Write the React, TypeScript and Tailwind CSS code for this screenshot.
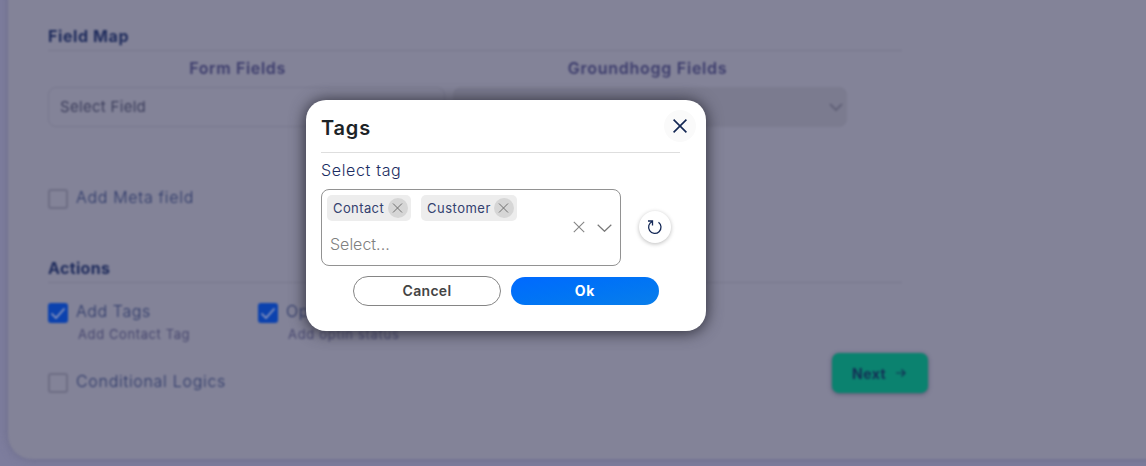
import React from "react";

type CheckProps = { label: string; labelClass: string; checked?: boolean };

function Check({ label, labelClass, checked = false }: CheckProps) {
  return (
    <div className="flex h-5 items-center whitespace-nowrap">
      <span
        className={
          checked
            ? "mt-[3px] flex size-5 shrink-0 items-center justify-center rounded-[3px] bg-[#0c42ae]"
            : "mt-[3px] size-5 shrink-0 rounded-[3px] border-2 border-[#6d6d84]"
        }
      >
        {checked && (
          <svg className="size-5" viewBox="0 0 20 20" fill="none" stroke="#8f98bd" strokeWidth="1.700">
            <path d="M3.5 10.5 8 15 16.500 5.500" />
          </svg>
        )}
      </span>
      <span className={"ml-2 text-[16px] font-light text-[#2b3768] " + labelClass}>{label}</span>
    </div>
  );
}

function Chip({ label, labelClass }: { label: string; labelClass: string }) {
  return (
    <span className="flex h-[26px] items-center rounded-[5px] bg-[#ededed] pr-[3px] pl-[6px]">
      <span className={"pt-[2px] text-[13px] whitespace-nowrap text-[#33416f] " + labelClass}>{label}</span>
      <span className="ml-auto flex size-5 items-center justify-center rounded-full bg-[#d6d6d6]">
        <svg className="size-5" viewBox="0 0 20 20" fill="none" stroke="#707070" strokeWidth="1">
          <path d="M5 5.500 14 14.500M14 5.500 5 14.500" />
        </svg>
      </span>
    </span>
  );
}

function Background() {
  return (
    <div className="-mt-2 h-[474px] w-[1160px] pl-2 blur-[0.8px]">
      <div className="h-[467px] rounded-bl-[24px] bg-[#838398] pl-10 shadow-[0_0_8px_1px_#6e6e8c]">
        <div className="flex h-[59px] w-[854px] items-end border-b border-[#77778d] pb-[4px]">
          <h2 className="text-[16px] leading-[20px] font-bold tracking-[0.6px] text-[#1e2b5c]">Field Map</h2>
        </div>
        <div className="flex h-[36px] w-[854px] items-center pb-[2px] text-[16px] font-semibold text-[#3c3c6c]">
          <div className="flex w-[379px] justify-center"><span className="tracking-[0.650px]">Form Fields</span></div>
          <div className="flex w-[441px] justify-center"><span className="tracking-[0.75px]">Groundhogg Fields</span></div>
        </div>
        <div className="flex gap-[8px]">
          <div className="flex h-10 w-[397px] items-center rounded-lg border border-[#78788e] pl-[11px] text-[15px] text-[#3c3e5c]">
            <span className="tracking-[0.3px]">Select Field</span>
          </div>
          <div className="flex h-10 w-[394px] items-center justify-end rounded-lg bg-[#7b7b8f] pr-[3px]">
            <svg className="size-4" viewBox="0 0 16 16" fill="none" stroke="#626278" strokeWidth="2">
              <path d="M2 5 8 11 14 5" />
            </svg>
          </div>
        </div>
        <div className="mt-[60px]">
          <Check label="Add Meta field" labelClass="tracking-[0.7px]" />
        </div>
        <div className="mt-[51px] flex h-[25px] w-[854px] items-start border-b border-[#77778d]">
          <h2 className="text-[16px] leading-[20px] font-bold tracking-[0.35px] text-[#1e2b5c]">Actions</h2>
        </div>
        <div className="mt-[18px] flex">
          <div className="w-[210px]">
            <Check label="Add Tags" labelClass="tracking-[0.6px]" checked />
            <p className="mt-[4px] pl-[30px] text-[13px] leading-[18px] tracking-[0.6px] text-[#484870]">Add Contact Tag</p>
          </div>
          <div className="w-[210px]">
            <Check label="Optin Status" labelClass="tracking-[0.6px]" checked />
            <p className="mt-[4px] pl-[30px] text-[13px] leading-[18px] tracking-[0.7px] text-[#484870]">Add optin status</p>
          </div>
        </div>
        <div className="flex w-[880px] items-start justify-between pt-[10px]">
          <div className="pt-[18px]">
            <Check label="Conditional Logics" labelClass="tracking-[0.7px]" />
          </div>
          <button className="flex h-10 w-24 items-center rounded-[7px] bg-[#0b826f] pl-5 text-[14px] font-bold text-[#142e55] shadow-[0_1px_4px_#55556f]">
            <span className="tracking-[0.5px]">Next</span>
            <svg className="ml-[9px] size-3" viewBox="0 0 12 12" fill="none" stroke="currentColor" strokeWidth="1.200">
              <path d="M1 6H10M6.500 2.500 10 6 6.500 9.500" />
            </svg>
          </button>
        </div>
      </div>
    </div>
  );
}

export default function App() {
  return (
    <main className="relative h-[466px] w-full overflow-hidden bg-[#7d7d9d] font-[Inter,sans-serif]">
      <Background />
      <section className="absolute top-[100px] left-[306px] h-[231px] w-[400px] rounded-[20px] bg-white px-[15px] shadow-[0_1px_15px_1px_#30303c]">
        <header className="flex h-[53px] w-[359px] items-center border-b border-[#dedede]">
          <h1 className="pt-[3px] text-[20px] font-semibold tracking-[0.8px] text-[#1d2327]">Tags</h1>
          <button className="-mr-4 ml-auto flex size-8 shrink-0 items-center justify-center rounded-full bg-[#fafafa]" aria-label="Close">
            <svg className="size-[14px]" viewBox="0 0 14 14" fill="none" stroke="#122653" strokeWidth="1.600">
              <path d="M.6.600 13.400 13.400M13.400.6.600 13.400" />
            </svg>
          </button>
        </header>
        <p className="flex h-9 items-center pb-[2px] text-[16px] font-light whitespace-nowrap text-[#1c2d62]">
          <span className="tracking-[0.65px]">Select tag</span>
        </p>
        <div className="flex items-center">
          <div className="flex h-[77px] w-[300px] items-center rounded-[8px] border border-[#929292] pr-[8px] pl-[5px]">
            <div className="h-full flex-1 pt-[5px]">
              <div className="flex gap-[10px]">
                <div className="grid w-[84px]"><Chip label="Contact" labelClass="tracking-[0.4px]" /></div>
                <div className="grid w-[96px]"><Chip label="Customer" labelClass="tracking-[0.5px]" /></div>
              </div>
              <p className="pt-[11px] pl-[3px] text-[16px] leading-[24px] font-light text-[#808080]">Select...</p>
            </div>
            <svg className="mr-[12px] mb-[2px] size-[12px]" viewBox="0 0 12 12" fill="none" stroke="#858585" strokeWidth="1.100">
              <path d="M.8.800 11.200 11.200M11.200.8.800 11.200" />
            </svg>
            <svg className="mt-[1px] h-2 w-[15px]" viewBox="0 0 15 8" fill="none" stroke="#777777" strokeWidth="1.200">
              <path d="M.7.700 7.500 7.300 14.300.7" />
            </svg>
          </div>
          <button className="mb-[2px] ml-[18px] flex size-8 items-center justify-center rounded-full bg-white shadow-[0_1px_4px_#bcbcbc]" aria-label="Refresh">
            <svg className="size-[16px]" viewBox="0 0 16 16" fill="none" stroke="#152957" strokeWidth="1.300">
              <path d="M1 2H5.500V6.500M5.300 2.500A6.200 6.200 0 1 0 11.500 3.200" />
            </svg>
          </button>
        </div>
        <div className="mt-[10px] ml-8 flex h-[30px] items-center gap-[10px]">
          <button className="flex h-[30px] w-[148px] items-center justify-center rounded-full border border-[#858585] pb-[2px] text-[14px] font-semibold text-[#444444]">
            <span className="tracking-[0.3px]">Cancel</span>
          </button>
          <button className="flex h-7 w-[148px] items-center justify-center rounded-full bg-linear-to-br from-[#0069ff] to-[#0a7eea] pb-[2px] text-[14px] font-bold text-white">
            <span className="tracking-[0.8px]">Ok</span>
          </button>
        </div>
      </section>
    </main>
  );
}
